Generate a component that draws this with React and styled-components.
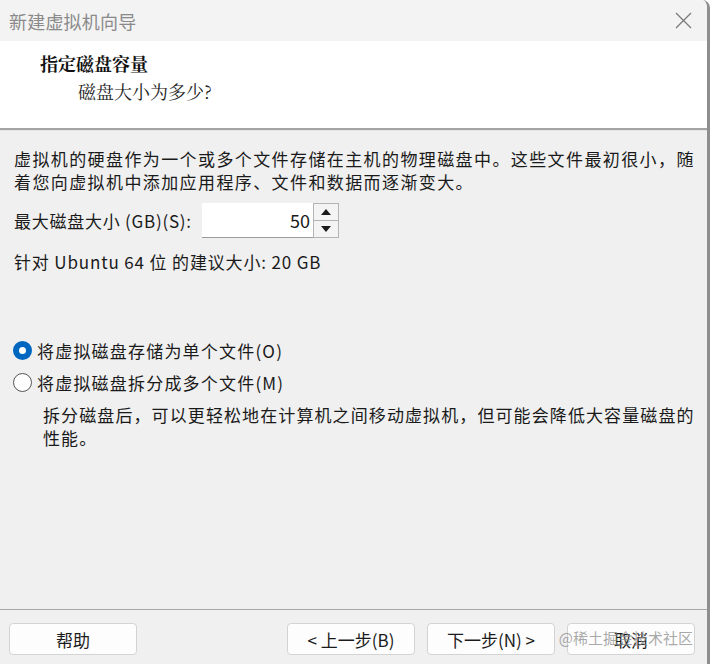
import { createGlobalStyle } from "styled-components";
import styled from "styled-components";

const GlobalStyle = createGlobalStyle`
  html, body {
    margin: 0;
    padding: 0;
    background: #ffffff;
  }
  body {
    font-family: "Noto Sans CJK SC", "Noto Sans", sans-serif;
  }
`;

const sans = `"Segoe UI", "Noto Sans CJK SC", "Noto Sans", sans-serif`;
const serif = `"Noto Serif CJK SC", "Liberation Serif", "Noto Sans CJK SC", serif`;

function App() {
  return (
    <>
      <GlobalStyle />
      <Window>
        <TitleBar>
          <Title>新建虚拟机向导</Title>
          <CloseButton aria-label="close">
            <svg width="17" height="17" viewBox="0 0 17 17">
              <path d="M1 1 L16 16 M16 1 L1 16" stroke="#7a7a7a" strokeWidth="1.3" fill="none" />
            </svg>
          </CloseButton>
        </TitleBar>

        <Header>
          <HeaderTitle>指定磁盘容量</HeaderTitle>
          <HeaderSub>磁盘大小为多少?</HeaderSub>
        </Header>
        <Divider />

        <Body>
          <Paragraph>
            虚拟机的硬盘作为一个或多个文件存储在主机的物理磁盘中。这些文件最初很小，随着您向虚拟机中添加应用程序、文件和数据而逐渐变大。
          </Paragraph>

          <SizeRow>
            <Label>最大磁盘大小 (GB)(S):</Label>
            <Spin>
              <SpinInput>50</SpinInput>
              <SpinButtons>
                <SpinButton>
                  <svg width="10" height="6" viewBox="0 0 10 6">
                    <path d="M0 6 L5 0 L10 6 Z" fill="#1a1a1a" />
                  </svg>
                </SpinButton>
                <SpinButton>
                  <svg width="10" height="6" viewBox="0 0 10 6">
                    <path d="M0 0 L5 6 L10 0 Z" fill="#1a1a1a" />
                  </svg>
                </SpinButton>
              </SpinButtons>
            </Spin>
          </SizeRow>

          <Hint>针对 Ubuntu 64 位 的建议大小: 20 GB</Hint>

          <Options>
            <Option>
              <Radio $checked />
              将虚拟磁盘存储为单个文件(O)
            </Option>
            <Option>
              <Radio />
              将虚拟磁盘拆分成多个文件(M)
            </Option>
            <OptionNote>
              拆分磁盘后，可以更轻松地在计算机之间移动虚拟机，但可能会降低大容量磁盘的性能。
            </OptionNote>
          </Options>
        </Body>

        <Footer>
          <Button>帮助</Button>
          <Spacer />
          <Button>&lt; 上一步(B)</Button>
          <Button>下一步(N) &gt;</Button>
          <Button>取消</Button>
          <Watermark>@稀土掘金技术社区</Watermark>
        </Footer>
      </Window>
    </>
  );
}

const Window = styled.div`
  position: relative;
  width: 707px;
  height: 664px;
  display: flex;
  flex-direction: column;
  background: #f0f0f0;
  border-right: 3px solid #8e8e8e;
  border-top-right-radius: 8px;
  overflow: hidden;
`;

const TitleBar = styled.div`
  height: 41px;
  flex-shrink: 0;
  display: flex;
  align-items: center;
  justify-content: space-between;
  padding: 0 15px 0 9px;
  background: #f3f3f3;
`;

const Title = styled.div`
  font-family: ${sans};
  font-size: 18px;
  color: #8a8a8a;
  letter-spacing: 0.2px;
`;

const CloseButton = styled.div`
  display: flex;
  align-items: center;
  width: 17px;
  height: 17px;
`;

const Header = styled.div`
  height: 87px;
  flex-shrink: 0;
  background: #ffffff;
  padding: 10px 0 0 40px;
  box-sizing: border-box;
`;

const HeaderTitle = styled.div`
  font-family: ${serif};
  font-weight: 700;
  font-size: 18px;
  line-height: 24px;
  color: #111;
`;

const HeaderSub = styled.div`
  font-family: ${serif};
  font-size: 18px;
  line-height: 24px;
  margin: 4px 0 0 38px;
  color: #222;
`;

const Divider = styled.div`
  height: 2px;
  flex-shrink: 0;
  background: #a3a3a3;
  border-bottom: 1px solid #e4e4e4;
`;

const Body = styled.div`
  flex: 1;
  display: flex;
  flex-direction: column;
  padding: 16px 6px 0 14px;
  font-family: ${sans};
  font-size: 17px;
  color: #1a1a1a;
`;

const Paragraph = styled.div`
  line-height: 23px;
  letter-spacing: 1.4px;
`;

const SizeRow = styled.div`
  display: flex;
  align-items: center;
  margin-top: 10px;
  height: 35px;
`;

const Label = styled.div`
  width: 188px;
  letter-spacing: 0.75px;
`;

const Spin = styled.div`
  display: flex;
  align-items: stretch;
  height: 35px;
`;

const SpinInput = styled.div`
  width: 111px;
  box-sizing: border-box;
  background: #ffffff;
  border-bottom: 1px solid #9a9a9a;
  display: flex;
  align-items: center;
  justify-content: flex-end;
  padding-right: 3px;
  font-size: 18px;
`;

const SpinButtons = styled.div`
  display: flex;
  flex-direction: column;
  width: 26px;
  border: 1px solid #b4b4b4;
  box-sizing: border-box;
`;

const SpinButton = styled.div`
  flex: 1;
  display: flex;
  align-items: center;
  justify-content: center;
  background: #f4f4f4;
  & + & {
    border-top: 1px solid #b4b4b4;
  }
`;

const Hint = styled.div`
  margin-top: 12px;
  line-height: 23px;
  letter-spacing: 0.85px;
`;

const Options = styled.div`
  margin-top: 66px;
  display: flex;
  flex-direction: column;
  gap: 9px;
  margin-left: -1px;
`;

const Option = styled.div`
  display: flex;
  align-items: center;
  gap: 5px;
  line-height: 23px;
  letter-spacing: 1.2px;
`;

const Radio = styled.span`
  width: 19px;
  height: 19px;
  box-sizing: border-box;
  border-radius: 50%;
  flex-shrink: 0;
  background: #ffffff;
  border: ${(p) => (p.$checked ? "6px solid #0067c0" : "1.3px solid #555")};
`;

const OptionNote = styled.div`
  margin: 0 0 0 30px;
  line-height: 23px;
  letter-spacing: 1.1px;
`;

const Footer = styled.div`
  position: relative;
  flex-shrink: 0;
  display: flex;
  gap: 12px;
  padding: 13px 12px 9px 9px;
  border-top: 1px solid #a8a8a8;
`;

const Spacer = styled.div`
  flex: 1;
`;

const Button = styled.div`
  width: 128px;
  height: 32px;
  box-sizing: border-box;
  display: flex;
  align-items: center;
  justify-content: center;
  background: #fdfdfd;
  border: 1px solid #d3d3d3;
  border-radius: 4px;
  font-family: ${sans};
  font-size: 17px;
  color: #1b1b1b;
`;

const Watermark = styled.div`
  position: absolute;
  right: 14px;
  bottom: 16px;
  font-family: "Noto Sans CJK SC", sans-serif;
  font-size: 15px;
  color: rgba(140, 140, 140, 0.75);
  pointer-events: none;
`;

export default App;
